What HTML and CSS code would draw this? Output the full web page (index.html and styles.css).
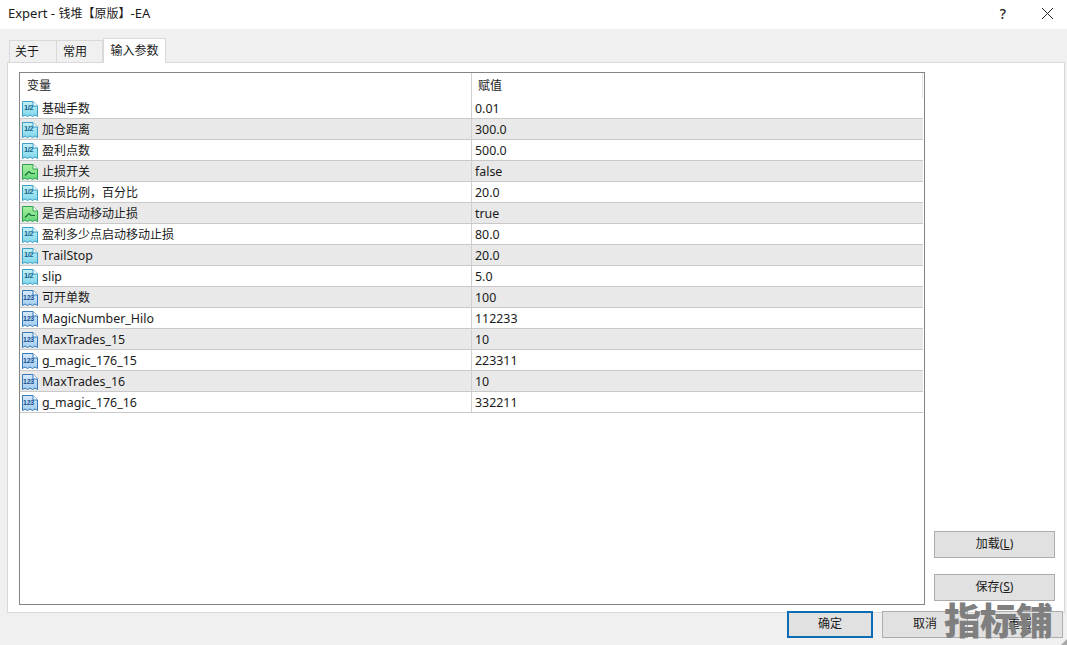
FILE: index.html
```html
<!DOCTYPE html>
<html lang="zh">
<head>
<meta charset="utf-8">
<title>Expert</title>
<link rel="stylesheet" href="styles.css">
</head>
<body>
<svg class="defs" width="0" height="0" aria-hidden="true">
  <linearGradient id="gd" x1="0" y1="0" x2="0" y2="1"><stop offset="0" stop-color="#c4f0f8"/><stop offset="1" stop-color="#7fd6ea"/></linearGradient>
  <linearGradient id="gb" x1="0" y1="0" x2="0" y2="1"><stop offset="0" stop-color="#a8f0a0"/><stop offset="1" stop-color="#62d87a"/></linearGradient>
  <linearGradient id="gn" x1="0" y1="0" x2="0" y2="1"><stop offset="0" stop-color="#d8e9fa"/><stop offset="1" stop-color="#a4cdf0"/></linearGradient>
  <symbol id="doc" viewBox="0 0 16 16">
    <path d="M.5.5H11L15.5 5V15.5L13 14 10.5 15.5 8 14 5.5 15.5 3 14 .5 15.5Z" fill="var(--fill)" stroke="var(--edge)"/>
    <path d="M11 .5V5H15.5" fill="#fff" stroke="var(--edge)"/>
  </symbol>
</svg>
<div class="window">
  <header class="titlebar">
    <span class="title">Expert - <span class="zh">钱堆【原版】</span>-EA</span>
    <div class="controls">
      <span class="help">?</span>
      <svg class="close" width="13" height="13" viewBox="0 0 13 13"><path d="M1 1 12 12M12 1 1 12" stroke="#222" stroke-width="1" fill="none"/></svg>
    </div>
  </header>
  <main class="body">
    <nav class="tabs">
      <span class="tab tab-a">关于</span>
      <span class="tab tab-b">常用</span>
      <span class="tab tab-active">输入参数</span>
    </nav>
    <section class="panel">
      <div class="table">
        <div class="row head"><div class="cell name">变量</div><div class="cell value">赋值</div></div>
        <div class="row"><div class="cell name zh"><span class="ico ico-d"><svg><use href="#doc"/></svg><i>1/2</i></span>基础手数</div><div class="cell value">0.01</div></div>
        <div class="row alt"><div class="cell name zh"><span class="ico ico-d"><svg><use href="#doc"/></svg><i>1/2</i></span>加仓距离</div><div class="cell value">300.0</div></div>
        <div class="row"><div class="cell name zh"><span class="ico ico-d"><svg><use href="#doc"/></svg><i>1/2</i></span>盈利点数</div><div class="cell value">500.0</div></div>
        <div class="row alt"><div class="cell name zh"><span class="ico ico-b"><svg><use href="#doc"/><path class="wave" d="M3 11.5 7 7.5 9 9.5 13 9.5"/></svg></span>止损开关</div><div class="cell value">false</div></div>
        <div class="row"><div class="cell name zh"><span class="ico ico-d"><svg><use href="#doc"/></svg><i>1/2</i></span>止损比例，百分比</div><div class="cell value">20.0</div></div>
        <div class="row alt"><div class="cell name zh"><span class="ico ico-b"><svg><use href="#doc"/><path class="wave" d="M3 11.5 7 7.5 9 9.5 13 9.5"/></svg></span>是否启动移动止损</div><div class="cell value">true</div></div>
        <div class="row"><div class="cell name zh"><span class="ico ico-d"><svg><use href="#doc"/></svg><i>1/2</i></span>盈利多少点启动移动止损</div><div class="cell value">80.0</div></div>
        <div class="row alt"><div class="cell name"><span class="ico ico-d"><svg><use href="#doc"/></svg><i>1/2</i></span>TrailStop</div><div class="cell value">20.0</div></div>
        <div class="row"><div class="cell name"><span class="ico ico-d"><svg><use href="#doc"/></svg><i>1/2</i></span>slip</div><div class="cell value">5.0</div></div>
        <div class="row alt"><div class="cell name zh"><span class="ico ico-n"><svg><use href="#doc"/></svg><i>123</i></span>可开单数</div><div class="cell value">100</div></div>
        <div class="row"><div class="cell name"><span class="ico ico-n"><svg><use href="#doc"/></svg><i>123</i></span>MagicNumber_Hilo</div><div class="cell value">112233</div></div>
        <div class="row alt"><div class="cell name"><span class="ico ico-n"><svg><use href="#doc"/></svg><i>123</i></span>MaxTrades_15</div><div class="cell value">10</div></div>
        <div class="row"><div class="cell name"><span class="ico ico-n"><svg><use href="#doc"/></svg><i>123</i></span>g_magic_176_15</div><div class="cell value">223311</div></div>
        <div class="row alt"><div class="cell name"><span class="ico ico-n"><svg><use href="#doc"/></svg><i>123</i></span>MaxTrades_16</div><div class="cell value">10</div></div>
        <div class="row"><div class="cell name"><span class="ico ico-n"><svg><use href="#doc"/></svg><i>123</i></span>g_magic_176_16</div><div class="cell value">332211</div></div>
      </div>
      <aside class="side">
        <button class="btn side-btn">加载(<u>L</u>)</button>
        <button class="btn side-btn">保存(<u>S</u>)</button>
      </aside>
    </section>
    <footer class="footer">
      <button class="btn foot-btn primary">确定</button>
      <button class="btn foot-btn">取消</button>
      <button class="btn foot-btn">重置</button>
    </footer>
  </main>
</div>
<div class="watermark">指标铺</div>
<div class="grip"></div>
</body>
</html>
```
FILE: styles.css
```css
* { box-sizing: border-box; }
html, body { margin: 0; height: 100%; }
body {
  width: 1067px;
  height: 645px;
  overflow: hidden;
  position: relative;
  background: #f0f0f0;
  color: #1a1a1a;
  font: 13px/1 "Noto Sans", "Noto Sans CJK SC", sans-serif;
}
.defs { position: absolute; }
.window { display: flex; flex-direction: column; height: 645px; }
.titlebar {
  height: 29px;
  background: #fff;
  display: flex;
  align-items: center;
  justify-content: space-between;
  padding: 0 13px 2px 8px;
  flex: none;
}
.title { font-size: 13px; }
.title .zh { font-size: 12px; }
.controls { display: flex; align-items: center; gap: 35px; }
.help { font-size: 14px; font-weight: 500; }
.close { display: block; }
.body { flex: 1; display: flex; flex-direction: column; padding: 9px 2px 0 7px; }
.tabs { display: flex; align-items: flex-end; height: 25px; padding-left: 2px; flex: none; position: relative; z-index: 1; }
.tab {
  display: flex;
  align-items: center;
  justify-content: center;
  height: 22px;
  background: #f0f0f0;
  border: 1px solid #d9d9d9;
  border-bottom: 0;
  font-size: 12px;
  margin-bottom: 1px;
  padding-top: 1px;
}
.tab-a { width: 48px; padding-right: 12px; }
.tab-b { width: 47px; margin-left: -1px; padding-right: 9px; }
.tab-active {
  width: 63px;
  height: 25px;
  margin-bottom: 0;
  background: #fff;
  margin-left: 0;
  padding: 0;
}
.panel {
  height: 551px;
  margin-top: -1px;
  background: #fff;
  border: 1px solid #d9d9d9;
  display: flex;
  padding: 9px 9px 7px 11px;
  flex: none;
}
.table {
  width: 906px;
  height: 533px;
  border: 1px solid #858585;
  flex: none;
}
.row { display: flex; height: 21px; border-bottom: 1px solid #c9c9c9; background: #fff; margin-right: 1px; }
.row.alt { background: #e9e9e9; }
.row.head { height: 25px; border-bottom: 0; }
.cell { display: flex; align-items: center; height: 100%; font-size: 12.4px; padding-top: 2px; }
.cell.zh { font-size: 12px; }
.name { width: 452px; border-right: 1px solid #d0d0d0; padding-left: 2px; flex: none; }
.value { flex: 1; padding-left: 3px; }
.head .name { padding-left: 7px; }
.head .value { padding-left: 6px; border-right: 1px solid #e4e4e4; }
.head .cell { font-size: 12px; padding-top: 1px; }
.ico {
  position: relative;
  width: 16px;
  height: 16px;
  margin-right: 4px;
  flex: none;
  display: block;
}
.ico svg { width: 16px; height: 16px; display: block; }
.ico i {
  position: absolute;
  left: 0;
  width: 13px;
  top: 2px;
  font: bold 7.5px/10px "Liberation Sans", sans-serif;
  text-align: center;
  letter-spacing: -0.4px;
  white-space: nowrap;
}
.ico-d { --fill: url(#gd); --edge: #3a9fc2; }
.ico-d i { color: #14648c; }
.ico-b { --fill: url(#gb); --edge: #2f9e52; }
.ico-n { --fill: url(#gn); --edge: #3579b8; }
.ico-n i { color: #174f90; font-size: 7px; top: 3px; letter-spacing: -0.2px; }
.wave { fill: none; stroke: #1e6a35; stroke-width: 1.2; }
.side {
  flex: 1;
  display: flex;
  flex-direction: column;
  align-items: flex-end;
  justify-content: flex-end;
  gap: 16px;
  padding: 0 0 4px;
}
.btn {
  background: #e1e1e1;
  border: 1px solid #adadad;
  color: #1a1a1a;
  font: 12px/1 "Noto Sans", "Noto Sans CJK SC", sans-serif;
  padding: 0 0 1px;
  margin: 0;
}
.side-btn { width: 121px; height: 27px; }
.footer {
  display: flex;
  justify-content: flex-end;
  gap: 9px;
  margin-top: -2px;
  padding-right: 2px;
  position: relative;
}
.foot-btn { width: 86px; height: 27px; }
.primary { border: 2px solid #0e6cb5; }
.watermark {
  position: absolute;
  left: 944px;
  top: 600px;
  font: 900 37px/38px "Noto Sans CJK SC", sans-serif;
  color: #7f7f7f;
  letter-spacing: -1px;
  white-space: nowrap;
}
.grip {
  position: absolute;
  right: 0;
  bottom: 0;
  width: 6px;
  height: 6px;
  background: radial-gradient(circle at 1px 1px, #a8a8a8 1px, transparent 1px) 0 0 / 2px 2px;
  clip-path: polygon(100% 0, 100% 100%, 0 100%);
}
```
